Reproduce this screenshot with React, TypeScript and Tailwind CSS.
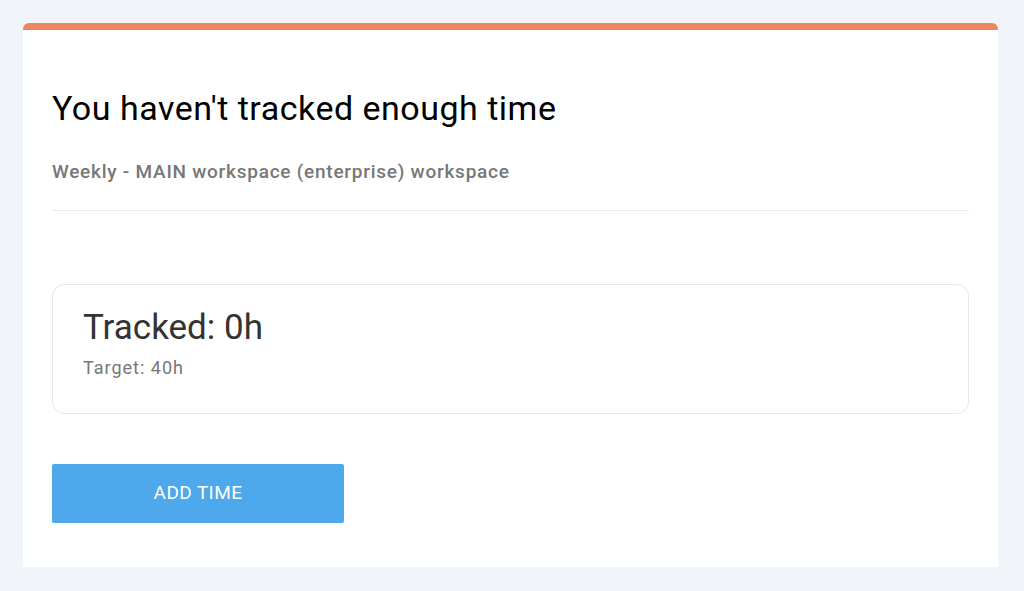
import React from 'react';

const App: React.FC = () => {
  return (
    <div className="min-h-screen bg-[#f1f4f8] pt-[23px] pl-[23px]" style={{ fontFamily: 'Roboto, "Liberation Sans", sans-serif' }}>
      <div className="w-[975px] bg-white rounded-t-[6px] border-t-[7px] border-[#ef8660] px-[29px] pt-[58px] pb-[44px]">
        <h1 className="text-[34px] leading-[40px] tracking-[0.5px] font-normal text-black">You haven't tracked enough time</h1>
        <p className="mt-[32px] text-[19px] leading-[24px] tracking-[0.75px] font-medium text-[#777777]">
          Weekly - MAIN workspace (enterprise) workspace
        </p>
        <div className="mt-[26px] h-px bg-[#e5e8ec]" />

        <div className="mt-[73px] h-[130px] rounded-[12px] border border-[#e4e8ec] px-[30px] pt-[23px]">
          <div className="text-[35px] leading-[40px] text-[#333333]">Tracked: 0h</div>
          <div className="mt-[9px] text-[18px] leading-[22px] tracking-[1px] text-[#777777]">Target: 40h</div>
        </div>

        <button className="mt-[50px] flex h-[59px] w-[292px] items-center justify-center rounded-[2px] bg-[#4ea8ec] text-[19px] tracking-[0.4px] text-white">
          ADD TIME
        </button>
      </div>
    </div>
  );
};

export default App;
